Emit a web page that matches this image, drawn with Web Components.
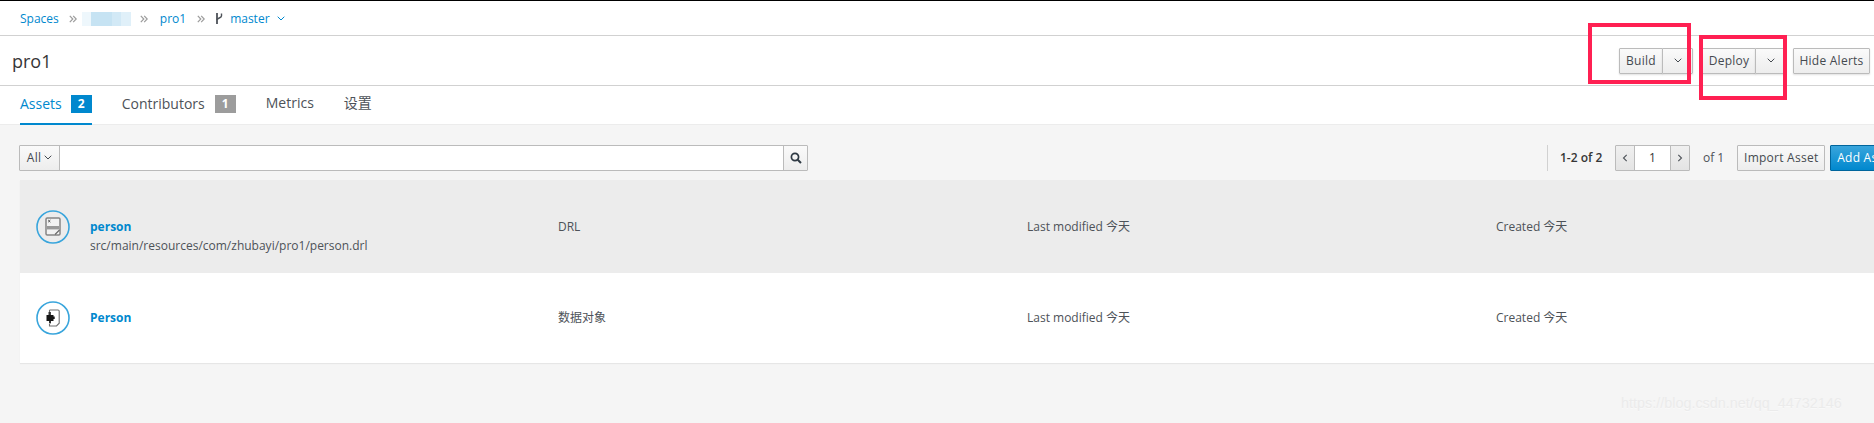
<!DOCTYPE html>
<html lang='en'>
<head>
<meta charset='UTF-8'>
<title>pro1</title>
<style>
  html, body { margin: 0; height: 423px; overflow: hidden; }
  body { background: #f5f5f5; color: #363636; font: 12px/17px 'Open Sans', 'Noto Sans CJK SC', sans-serif; }
</style>
</head>
<body>
<app-page>
  <crumb-bar></crumb-bar>
  <title-bar>pro1</title-bar>
  <tab-bar></tab-bar>
  <asset-toolbar></asset-toolbar>
  <asset-list>
    <asset-row name='person' path='src/main/resources/com/zhubayi/pro1/person.drl' kind='DRL' icon='drl' selected></asset-row>
    <asset-row name='Person' kind='数据对象' icon='data'></asset-row>
  </asset-list>
</app-page>

<script>
  const caret = `<svg width='8' height='5' viewBox='0 0 8 5'><path d='M.7.7 4 4l3.3-3.3' fill='none' stroke='currentColor' stroke-width='1'/></svg>`;
  const dbl = `<svg width='8' height='8' viewBox='0 0 8 8'><path d='M.8.8 3.8 4 .8 7.2M4.2.8 7.2 4 4.2 7.2' fill='none' stroke='#9c9c9c' stroke-width='1.2'/></svg>`;

  // 버튼
  class PfBtn extends HTMLElement {
    connectedCallback() {
      this.attachShadow({mode: 'open'});
      this.shadowRoot.innerHTML = `<style>
        :host { display: inline-flex; align-items: center; justify-content: center; box-sizing: border-box; height: 26px; padding: 0 6px;
          border: 1px solid #bbb; border-radius: 1px; background: linear-gradient(#fafafa, #ededed); color: #454a50; font-size: 12px; letter-spacing: .25px; white-space: nowrap; }
        :host([primary]) { background: linear-gradient(#39a5dc, #0088ce); border-color: #00659c; color: #fff; }
        :host([flat]) { box-shadow: 0 1px 2px rgba(0,0,0,.12); }
      </style><slot></slot>`;
    }
  }
  customElements.define('pf-btn', PfBtn);

  class AppPage extends HTMLElement {
    connectedCallback() {
      this.attachShadow({mode: 'open'});
      this.shadowRoot.innerHTML = `<style>
        :host { display: block; position: relative; width: 1874px; height: 423px; overflow: hidden; border-top: 1px solid #000; box-sizing: border-box; }
        .mark { position: absolute; box-sizing: border-box; border: 4px solid #ff2052; }
        .m1 { left: 1588px; top: 22px; width: 103px; height: 61px; }
        .m2 { left: 1699px; top: 34px; width: 88px; height: 65px; }
        .wm { position: absolute; left: 1621px; top: 392px; font: 14.4px/20px 'Liberation Sans', sans-serif; color: #ebebeb; text-shadow: 0 1px 0 #f9f9f9; white-space: nowrap; }
      </style><slot></slot>
      <div class='mark m1'></div><div class='mark m2'></div>
      <div class='wm'>https://blog.csdn.net/qq_44732146</div>`;
    }
  }
  customElements.define('app-page', AppPage);

  class CrumbBar extends HTMLElement {
    connectedCallback() {
      this.attachShadow({mode: 'open'});
      this.shadowRoot.innerHTML = `<style>
        :host { display: flex; align-items: center; box-sizing: border-box; height: 35px; padding: 1px 0 0 20px; background: #fff; border-bottom: 1px solid #d1d1d1; color: #0088ce; }
        .s1 { margin: 0 5px 0 10px; display: flex; } .s2 { margin: 0 12px 0 9px; display: flex; } .s3 { margin: 0 10px 0 11px; display: flex; }
        .blur { width: 49px; height: 14px; background: linear-gradient(90deg, #eef7fc 0 9px, #c6e3f3 9px 30px, #d2e9f6 30px 39px, #e0f0f9 39px); }
        .fork { margin-right: 7px; display: flex; }
        .caret { margin-left: 7px; display: flex; }
      </style>
      <span>Spaces</span><span class='s1'>${dbl}</span><span class='blur'></span><span class='s2'>${dbl}</span><span>pro1</span><span class='s3'>${dbl}</span>
      <span class='fork'><svg width='8' height='11' viewBox='0 0 8 11'><path d='M2 0v11' stroke='#4d5258' stroke-width='1.8'/><path d='M6.5 .5v2.5C6.5 5 2 5 2 7' fill='none' stroke='#4d5258' stroke-width='1.4'/></svg></span><span>master</span><span class='caret'>${caret}</span>`;
    }
  }
  customElements.define('crumb-bar', CrumbBar);

  class TitleBar extends HTMLElement {
    connectedCallback() {
      this.attachShadow({mode: 'open'});
      this.shadowRoot.innerHTML = `<style>
        :host { display: flex; align-items: center; box-sizing: border-box; height: 50px; padding: 0 4px 0 12px; background: #fff; border-bottom: 1px solid #d1d1d1; }
        h1 { flex: 1; margin: 0; font: 400 18px/24px 'Open Sans', sans-serif; color: #363636; }
        .acts { display: flex; align-items: center; }
        .grp { display: flex; }
        .grp pf-btn + pf-btn { margin-left: -1px; width: 31px; padding: 0; }
        .b { width: 44px; padding: 0; }
        .dep { width: 54px; padding: 0; }
        .hide { width: 77px; padding: 0; }
        .d { margin: 0 7px 0 9px; }
        svg { display: block; }
      </style>
      <h1><slot></slot></h1>
      <div class='acts'>
        <div class='grp'><pf-btn class='b' flat>Build</pf-btn><pf-btn flat>${caret}</pf-btn></div>
        <div class='grp d'><pf-btn class='dep' flat>Deploy</pf-btn><pf-btn flat>${caret}</pf-btn></div>
        <pf-btn class='hide' flat>Hide Alerts</pf-btn>
      </div>`;
    }
  }
  customElements.define('title-bar', TitleBar);

  class TabBar extends HTMLElement {
    connectedCallback() {
      this.attachShadow({mode: 'open'});
      this.shadowRoot.innerHTML = `<style>
        :host { display: flex; box-sizing: border-box; height: 39px; padding-left: 20px; gap: 30px; background: #fff; border-bottom: 1px solid #ececec; font-size: 14px; color: #4d5258; }
        .tab { display: flex; align-items: center; height: 39px; box-sizing: border-box; padding-bottom: 4px; gap: 10px; white-space: nowrap; }
        .up { padding-bottom: 6px; }
        .on { color: #0088ce; border-bottom: 2px solid #0088ce; padding-bottom: 2px; gap: 9px; }
        .n { display: inline-flex; align-items: center; justify-content: center; width: 21px; height: 18px; background: #9c9c9c; color: #fff; font-weight: 700; font-size: 12px; }
        .on .n { background: #0088ce; }
      </style>
      <div class='tab on'>Assets <span class='n'>2</span></div>
      <div class='tab'>Contributors <span class='n'>1</span></div>
      <div class='tab up'>Metrics</div>
      <div class='tab up'>设置</div>`;
    }
  }
  customElements.define('tab-bar', TabBar);

  class AssetToolbar extends HTMLElement {
    connectedCallback() {
      this.attachShadow({mode: 'open'});
      this.shadowRoot.innerHTML = `<style>
        :host { display: flex; align-items: center; box-sizing: border-box; width: 1950px; height: 55px; padding: 10px 0 0 19px; background: #f5f5f5; }
        .search { display: flex; align-items: center; }
        .all { width: 41px; padding: 0; gap: 3px; }
        .in { box-sizing: border-box; width: 725px; height: 26px; background: #fff; border: 1px solid #bbb; margin-left: -1px; }
        .go { width: 25px; padding: 0; margin-left: -1px; }
        .right { margin-left: auto; display: flex; align-items: center; width: 403px; height: 26px; box-sizing: border-box; border-left: 1px solid #d1d1d1; padding-left: 12px; }
        .count { font-weight: 600; color: #363636; width: 55px; white-space: nowrap; }
        .p { width: 20px; padding: 0; color: #4d5258; background: linear-gradient(#f0f0f0, #e4e4e4); }
        .page { box-sizing: border-box; width: 37px; height: 26px; margin: 0 -1px; background: #fff; border: 1px solid #bbb; text-align: center; line-height: 24px; position: relative; }
        .of { margin: 0 13px 0 13px; color: #4d5258; white-space: nowrap; }
        .add { margin-left: 5px; width: 78px; justify-content: flex-start; }
        .imp { width: 88px; padding: 0; }
        svg { display: block; }
      </style>
      <div class='search'>
        <pf-btn class='all'>All ${caret}</pf-btn>
        <div class='in'></div>
        <pf-btn class='go'><svg width='12' height='12' viewBox='0 0 12 12'><circle cx='5' cy='5' r='3.6' fill='none' stroke='#2f3a44' stroke-width='1.7'/><path d='M7.7 7.7 11 11' stroke='#2f3a44' stroke-width='2'/></svg></pf-btn>
      </div>
      <div class='right'>
        <span class='count'>1-2 of 2</span>
        <pf-btn class='p'><svg width='6' height='8' viewBox='0 0 6 8'><path d='M4.7.8 1.5 4l3.2 3.2' fill='none' stroke='currentColor' stroke-width='1.1'/></svg></pf-btn>
        <div class='page'>1</div>
        <pf-btn class='p'><svg width='6' height='8' viewBox='0 0 6 8'><path d='M1.3.8 4.5 4 1.3 7.2' fill='none' stroke='currentColor' stroke-width='1.1'/></svg></pf-btn>
        <span class='of'>of 1</span>
        <pf-btn class='imp'>Import Asset</pf-btn>
        <pf-btn class='add' primary>Add Asset</pf-btn>
      </div>`;
    }
  }
  customElements.define('asset-toolbar', AssetToolbar);

  class AssetList extends HTMLElement {
    connectedCallback() {
      this.attachShadow({mode: 'open'});
      this.shadowRoot.innerHTML = `<style>
        :host { display: block; margin-left: 20px; width: 1960px; box-shadow: 0 1px 1px rgba(0,0,0,.06); }
      </style><slot></slot>`;
    }
  }
  customElements.define('asset-list', AssetList);

  const icons = {
    drl: `<rect x='11' y='9' width='14' height='17' rx='1.2' fill='#f2f2f2' stroke='#858585' stroke-width='1.5'/><rect x='12' y='17' width='12' height='3.4' fill='#999'/><path d='M13.2 11l2.2 2.2m0-2.2l-2.2 2.2' stroke='#444' stroke-width='.9'/><path d='M20 25.5l4.5-4.5' stroke='#666' stroke-width='1.1'/>`,
    data: `<path d='M14.5 10h8.5a1.2 1.2 0 0 1 1.2 1.2v12l-2.7 2.8h-7v-2' fill='#fff' stroke='#6f6f6f' stroke-width='1.1'/><path d='M14.5 10v3' stroke='#6f6f6f' stroke-width='1.1'/><path d='M11.5 15h7v1.6h1.2v2.4h-1.2v2H11.5z' fill='#151515'/><rect x='13.5' y='12' width='2.4' height='3' fill='#333'/><rect x='14' y='21' width='2' height='2.4' fill='#333'/>`
  };

  class AssetRow extends HTMLElement {
    connectedCallback() {
      const a = k => this.getAttribute(k);
      this.attachShadow({mode: 'open'});
      this.shadowRoot.innerHTML = `<style>
        :host { display: flex; box-sizing: border-box; height: 90px; padding: 27px 0 0 15px; background: #fff; color: #4d5258; }
        :host([selected]) { height: 93px; padding-top: 29px; background: #ececec; }
        svg { display: block; flex: none; width: 36px; height: 36px; }
        .col { width: 469px; flex: none; padding-top: 9px; }
        .first { width: 468px; margin-left: 19px; }
        b { display: block; color: #0088ce; font-weight: 700; height: 19px; }
        .p { color: #4d5258; }
      </style>
      <svg viewBox='0 0 36 36'><circle cx='18' cy='18' r='16' fill='none' stroke='#39a5dc' stroke-width='1.6'/>${icons[a('icon')]}</svg>
      <div class='col first'><b>${a('name')}</b>${a('path') ? `<div class='p'>${a('path')}</div>` : ''}</div>
      <div class='col'>${a('kind')}</div>
      <div class='col'>Last modified 今天</div>
      <div class='col'>Created 今天</div>`;
    }
  }
  customElements.define('asset-row', AssetRow);
</script>
</body>
</html>
